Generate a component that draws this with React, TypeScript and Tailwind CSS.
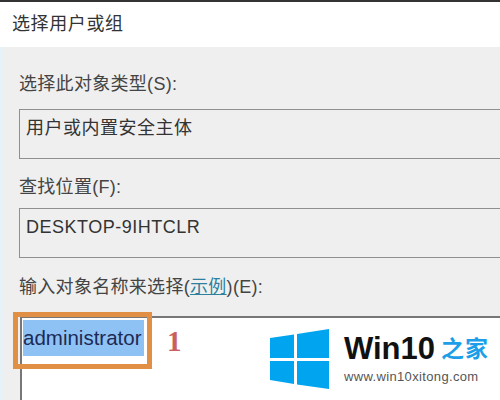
const cjk = "font-['Liberation_Sans','Noto_Sans_CJK_SC',sans-serif]";

function ReadonlyBox({ text }: { text: string }) {
  return (
    <div className="h-[50px] ml-[19px] border-y border-l border-[#8f8f8f] pl-[6px] pt-[6px]">
      <span className="text-[18px] leading-[24px] tracking-[0.5px] text-[#333] block">{text}</span>
    </div>
  );
}

export default function App() {
  return (
    <div className={`w-[500px] h-[400px] overflow-hidden relative bg-[#efefef] ${cjk}`}>
      <div className="h-[2px] bg-[#333]" />
      {/* title bar */}
      <div className="h-[45px] bg-white pl-[12px] pt-[10px] text-[18px] leading-[24px] tracking-[0.6px] text-[#333]">选择用户或组</div>

      <div className="border-l-[3px] border-[#e6f1f8] h-[353px]">
        <div className="pt-[25px] pl-[16px] text-[18px] leading-[24px] tracking-[0.3px] text-[#444]">选择此对象类型(S):</div>
        <div className="mt-[13px] -ml-[3px]">
          <ReadonlyBox text="用户或内置安全主体" />
        </div>
        <div className="mt-[16px] pl-[16px] text-[18px] leading-[24px] tracking-[0.3px] text-[#444]">查找位置(F):</div>
        <div className="mt-[9px] -ml-[3px]">
          <ReadonlyBox text="DESKTOP-9IHTCLR" />
        </div>
        <div className="mt-[17px] pl-[16px] text-[18px] leading-[24px] tracking-[0.3px] text-[#444] whitespace-nowrap">
          输入对象名称来选择(<span className="text-[#2f7f9f] underline">示例</span>)(E):
        </div>
        {/* name input */}
        <div className="mt-[17px] -ml-[3px] pl-[20px]">
          <div className="h-[90px] bg-white border-t-2 border-l-2 border-[#777] pl-[1px] pt-[2px]">
            <span className="inline-block w-[121px] h-[36px] bg-[#8fc2f4] text-[20.5px] leading-[36px] text-[#1d2a55] whitespace-nowrap">administrator</span>
          </div>
        </div>
      </div>

      {/* annotation */}
      <div className="absolute left-[13px] top-[312px] w-[139px] h-[57px] border-[5px] border-[#e08f45]" />
      <div className="absolute left-[167px] top-[324px] text-[29px] leading-[34px] font-bold text-[#c9605c] font-['Liberation_Serif',serif]">1</div>

      {/* watermark */}
      <div className="absolute left-[265px] top-[318px] w-[235px] h-[82px] bg-white flex items-center pl-[5px]">
        <svg width="60" height="60" viewBox="0 0 60 60" className="shrink-0">
          <path fill="#00a4ef" d="M0 9 L24 5.5 V29 H0 Z M27 5 L59 0 V29 H27 Z M0 32 H24 V55 L0 51 Z M27 32 H59 V60 L27 55.5 Z" />
        </svg>
        <div className="ml-[14px] -mt-[1px]">
          <div className="flex items-center h-[32px]">
            <span className="font-bold text-[31px] leading-[32px] text-[#111]">Win10</span>
            <span className="ml-[6px] text-[23px] leading-[28px] font-bold text-[#1c9fe8] tracking-[1px]">之家</span>
          </div>
          <div className="mt-[4px] text-[13px] leading-[16px] text-[#555] tracking-[0.35px] whitespace-nowrap">www.win10xitong.com</div>
        </div>
      </div>
    </div>
  );
}
